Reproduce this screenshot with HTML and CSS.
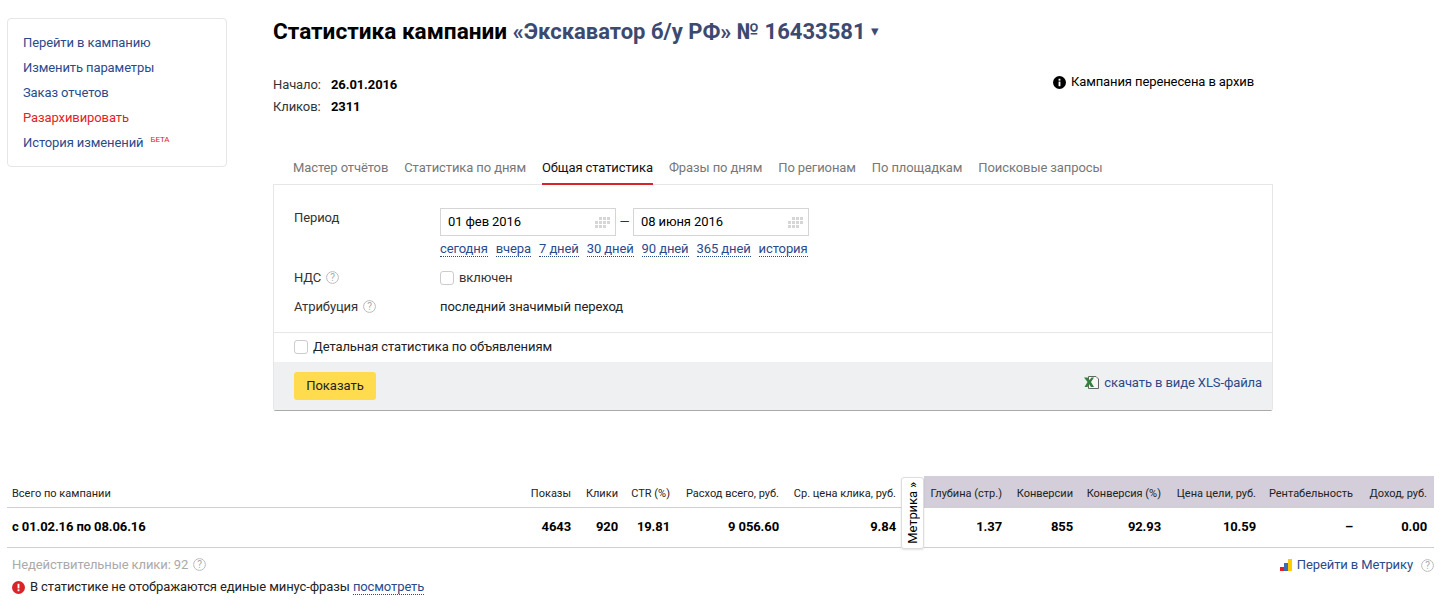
FILE: index.html
```html
<!DOCTYPE html>
<html lang="ru">
<head>
<meta charset="utf-8">
<title>Статистика кампании</title>
<link rel="stylesheet" href="styles.css">
</head>
<body>
<div class="top">
  <aside class="side">
    <a class="side-link">Перейти в кампанию</a>
    <a class="side-link">Изменить параметры</a>
    <a class="side-link">Заказ отчетов</a>
    <a class="side-link red">Разархивировать</a>
    <a class="side-link">История изменений<sup class="beta">БЕТА</sup></a>
  </aside>
  <main class="main">
    <h1 class="title">Статистика кампании <span class="camp">«Экскаватор б/у РФ» № 16433581</span><span class="caret">▾</span></h1>
    <div class="meta">
      <div class="facts">
        <div class="fact"><span class="fact-k">Начало:</span><b>26.01.2016</b></div>
        <div class="fact"><span class="fact-k">Кликов:</span><b>2311</b></div>
      </div>
      <div class="notice">
        <svg class="ico13" viewBox="0 0 14 14"><circle cx="7" cy="7" r="7" fill="#000"/><rect x="6" y="6" width="2" height="5" fill="#fff"/><rect x="6" y="3" width="2" height="2" fill="#fff"/></svg>
        Кампания перенесена в архив
      </div>
    </div>
    <nav class="tabs">
      <a class="tab">Мастер отчётов</a>
      <a class="tab">Статистика по дням</a>
      <a class="tab on">Общая статистика</a>
      <a class="tab">Фразы по дням</a>
      <a class="tab">По регионам</a>
      <a class="tab">По площадкам</a>
      <a class="tab">Поисковые запросы</a>
    </nav>
    <section class="card">
      <div class="form">
        <div class="lbl l-period">Период</div>
        <div class="period">
          <div class="dates">
            <div class="date">01 фев 2016<svg class="cal" viewBox="0 0 15 11"><path d="M0 4h3v3H0zM4 4h3v3H4zM8 4h3v3H8zM12 4h3v3h-3zM0 8h3v3H0zM4 8h3v3H4zM8 8h3v3H8zM4 0h3v3H4zM8 0h3v3H8zM12 0h3v3h-3z" fill="#d6d6d6"/></svg></div>
            <span class="dash">—</span>
            <div class="date">08 июня 2016<svg class="cal" viewBox="0 0 15 11"><path d="M0 4h3v3H0zM4 4h3v3H4zM8 4h3v3H8zM12 4h3v3h-3zM0 8h3v3H0zM4 8h3v3H4zM8 8h3v3H8zM4 0h3v3H4zM8 0h3v3H8zM12 0h3v3h-3z" fill="#d6d6d6"/></svg></div>
          </div>
          <div class="quick">
            <a class="dot">сегодня</a><a class="dot">вчера</a><a class="dot">7 дней</a><a class="dot">30 дней</a><a class="dot">90 дней</a><a class="dot">365 дней</a><a class="dot">история</a>
          </div>
        </div>
        <div class="lbl l-vat">НДС <svg class="q" viewBox="0 0 13 13"><circle cx="6.5" cy="6.5" r="5.9" fill="none" stroke="#bbb"/><text x="6.5" y="9.6" text-anchor="middle" class="q-t">?</text></svg></div>
        <label class="check-row v-vat"><span class="box"></span>включен</label>
        <div class="lbl l-attr">Атрибуция <svg class="q" viewBox="0 0 13 13"><circle cx="6.5" cy="6.5" r="5.9" fill="none" stroke="#bbb"/><text x="6.5" y="9.6" text-anchor="middle" class="q-t">?</text></svg></div>
        <div class="v-attr">последний значимый переход</div>
      </div>
      <label class="detail"><span class="box"></span>Детальная статистика по объявлениям</label>
      <div class="actions">
        <button class="btn">Показать</button>
        <a class="xls">
          <svg class="xls-ico" viewBox="0 0 15 15"><path d="M4.500 1.500h7.500l2.500 2.500v9.500h-10z" fill="#f7f7f7" stroke="#666"/><path d="M0 2.500h3.500l2 2.500 2-2.500h2.500L7 7l3 5H7L5.200 9.200 3.500 12H.5L3.500 7z" fill="#34803c"/></svg>
          скачать в виде XLS-файла
        </a>
      </div>
    </section>
  </main>
</div>

<section class="stats">
  <div class="c h first">Всего по кампании</div>
  <div class="c h">Показы</div>
  <div class="c h">Клики</div>
  <div class="c h">CTR (%)</div>
  <div class="c h">Расход всего, руб.</div>
  <div class="c h tight">Ср. цена клика, руб.</div>
  <div class="metrika"><span class="metrika-t">Метрика »</span></div>
  <div class="c h p">Глубина (стр.)</div>
  <div class="c h p">Конверсии</div>
  <div class="c h p">Конверсия (%)</div>
  <div class="c h p">Цена цели, руб.</div>
  <div class="c h p">Рентабельность</div>
  <div class="c h p">Доход, руб.</div>
  <div class="c v first">с 01.02.16 по 08.06.16</div>
  <div class="c v">4643</div>
  <div class="c v">920</div>
  <div class="c v">19.81</div>
  <div class="c v">9 056.60</div>
  <div class="c v tight">9.84</div>
  <div class="c v">1.37</div>
  <div class="c v">855</div>
  <div class="c v">92.93</div>
  <div class="c v">10.59</div>
  <div class="c v">–</div>
  <div class="c v">0.00</div>
</section>

<footer class="foot">
  <div class="foot-l">
    <div class="invalid">Недействительные клики: 92 <svg class="q" viewBox="0 0 13 13"><circle cx="6.5" cy="6.5" r="5.9" fill="none" stroke="#bbb"/><text x="6.5" y="9.6" text-anchor="middle" class="q-t">?</text></svg></div>
    <div class="warn">
      <svg class="ico13" viewBox="0 0 14 14"><circle cx="7" cy="7" r="7" fill="#d8232a"/><rect x="6" y="3" width="2" height="5" fill="#fff"/><rect x="6" y="9" width="2" height="2" fill="#fff"/></svg>
      <span>В статистике не отображаются единые минус-фразы <a class="dot">посмотреть</a></span>
    </div>
  </div>
  <div class="foot-r">
    <svg class="bars" viewBox="0 0 12 12"><rect x="0" y="8" width="4" height="4" fill="#e0212b"/><rect x="4" y="4" width="4" height="8" fill="#3f6cb5"/><rect x="8" y="0" width="4" height="12" fill="#fc0"/></svg>
    <a class="m-link">Перейти в Метрику</a>
    <svg class="q" viewBox="0 0 13 13"><circle cx="6.5" cy="6.5" r="5.9" fill="none" stroke="#bbb"/><text x="6.5" y="9.6" text-anchor="middle" class="q-t">?</text></svg>
  </div>
</footer>
</body>
</html>
```
FILE: styles.css
```css
* { box-sizing: border-box; }
html, body { margin: 0; padding: 0; }
body {
  width: 1450px;
  height: 604px;
  overflow: hidden;
  background: #fff;
  color: #000;
  font: 13px/16px Roboto, "Noto Sans", sans-serif;
  letter-spacing: -0.1px;
}
a { color: #2b4a8c; text-decoration: none; }

.top { display: flex; align-items: flex-start; padding: 18px 0 0 7px; height: 476px; }
.side {
  width: 220px;
  height: 149px;
  flex: none;
  display: flex;
  flex-direction: column;
  padding: 14px 15px 0;
  border: 1px solid #e6e6e6;
  border-radius: 4px;
  margin-right: 46px;
}
.side-link { display: block; flex: none; height: 25px; line-height: 20px; }
.side-link.red { color: #e31e24; }
.beta { color: #d8232a; font-size: 8px; line-height: 8px; margin-left: 7px; vertical-align: 5px; }

.main { width: 1000px; flex: none; }
.title { margin: 0; font-size: 22.6px; line-height: 26px; font-weight: 700; letter-spacing: 0; }
.camp { color: #3c4a70; font-size: 22px; }
.caret { color: #3c4a70; font-size: 15px; margin-left: 5px; font-weight: 400; vertical-align: 3px; }

.meta { display: flex; justify-content: space-between; align-items: flex-start; margin-top: 29px; height: 75px; }
.fact { height: 22px; line-height: 22px; display: flex; }
.fact-k { width: 58px; color: #333; }
.notice { display: flex; align-items: center; gap: 5px; height: 22px; margin: -3px 19px 0 0; line-height: 22px; }
.ico13 { width: 13px; height: 13px; flex: none; }

.tabs { display: flex; gap: 16px; padding-left: 20px; height: 36px; }
.tab { color: #777; height: 36px; line-height: 38px; }
.tab.on { color: #111; border-bottom: 2px solid #d8232a; }

.card {
  margin-top: -1px;
  height: 227px;
  border: 1px solid #e6e6e6;
  border-bottom: 1px solid #aaa;
  border-radius: 0 0 3px 3px;
  display: flex;
  flex-direction: column;
}
.form {
  height: 148px;
  flex: none;
  display: grid;
  grid-template-columns: 146px 1fr;
  grid-template-rows: 57px 30px 28px;
  padding: 23px 0 0 20px;
  border-bottom: 1px solid #e6e6e6;
}
.lbl { color: #333; }
.l-period { padding-top: 2px; }
.q { width: 13px; height: 13px; vertical-align: -2px; margin-left: 2px; flex: none; }
.q-t { font: 10px Roboto, sans-serif; fill: #aaa; }
.dates { display: flex; align-items: center; gap: 3px; }
.date {
  width: 176px;
  height: 28px;
  border: 1px solid #d5d5d5;
  padding-left: 7px;
  line-height: 26px;
  display: flex;
  justify-content: space-between;
  align-items: center;
}
.cal { width: 15px; height: 11px; margin-right: 5px; }
.dash { width: 11px; text-align: center; color: #333; }
.quick { display: flex; gap: 8px; margin-top: 5px; }
.dot { border-bottom: 1px dotted #2b4a8c; line-height: 15px; }
.check-row { display: flex; align-items: center; gap: 5px; height: 16px; margin-top: 5px; color: #333; }
.l-vat { margin-top: 5px; }
.box {
  width: 14px; height: 14px; flex: none;
  border: 1px solid #ccc;
  border-radius: 3px;
  background: #fff;
}
.l-attr { margin-top: 4px; }
.v-attr { margin-top: 4px; color: #222; }
.detail {
  display: flex;
  align-items: center;
  gap: 5px;
  flex: none;
  height: 29px;
  padding: 0 0 2px 20px;
  color: #222;
}
.actions {
  flex: 1;
  background: #eff0f2;
  display: flex;
  justify-content: space-between;
  align-items: center;
  padding: 0 10px 0 20px;
}
.btn {
  width: 82px;
  height: 28px;
  border: 0;
  border-radius: 3px;
  background: #ffdb4d;
  color: #222;
  font: inherit;
  padding: 0;
}
.xls { display: flex; align-items: center; gap: 5px; margin-bottom: 7px; }
.xls-ico { width: 15px; height: 15px; }

.stats {
  margin-left: 7px;
  width: 1427px;
  display: grid;
  grid-template-columns: 519px 52px 47px 52px 109px 115px 23px 85px 71px 88px 95px 97px 74px;
  grid-template-rows: 32px 40px;
}
.c {
  text-align: right;
  padding-right: 7px;
  border-bottom: 1px solid #d0d0d0;
  white-space: nowrap;
}
.h { font-size: 11px; line-height: 36px; color: #222; letter-spacing: 0; }
.v { font-size: 13px; font-weight: 700; line-height: 37px; letter-spacing: -0.1px; }
.first { text-align: left; padding-left: 5px; }
.tight { padding-right: 5px; }
.p { background: #d3ced9; }
.metrika {
  grid-row: 1 / span 2;
  grid-column: 7;
  height: 72px;
  margin-top: 1px;
  background: #fff;
  border: 1px solid #ddd;
  border-radius: 3px;
  box-shadow: 0 1px 2px rgba(0,0,0,.12);
  display: flex;
  align-items: center;
  justify-content: center;
  z-index: 1;
}
.metrika-t { writing-mode: vertical-rl; transform: rotate(180deg); font-size: 13px; line-height: 20px; white-space: nowrap; }

.foot { display: flex; justify-content: space-between; padding: 9px 16px 0 12px; }
.invalid { color: #aaa; height: 22px; line-height: 16px; }
.warn { display: flex; align-items: center; gap: 5px; height: 16px; color: #222; }
.foot-r { display: flex; align-items: center; height: 16px; }
.bars { width: 12px; height: 12px; margin-right: 5px; }
.m-link { margin-right: 6px; }
```
